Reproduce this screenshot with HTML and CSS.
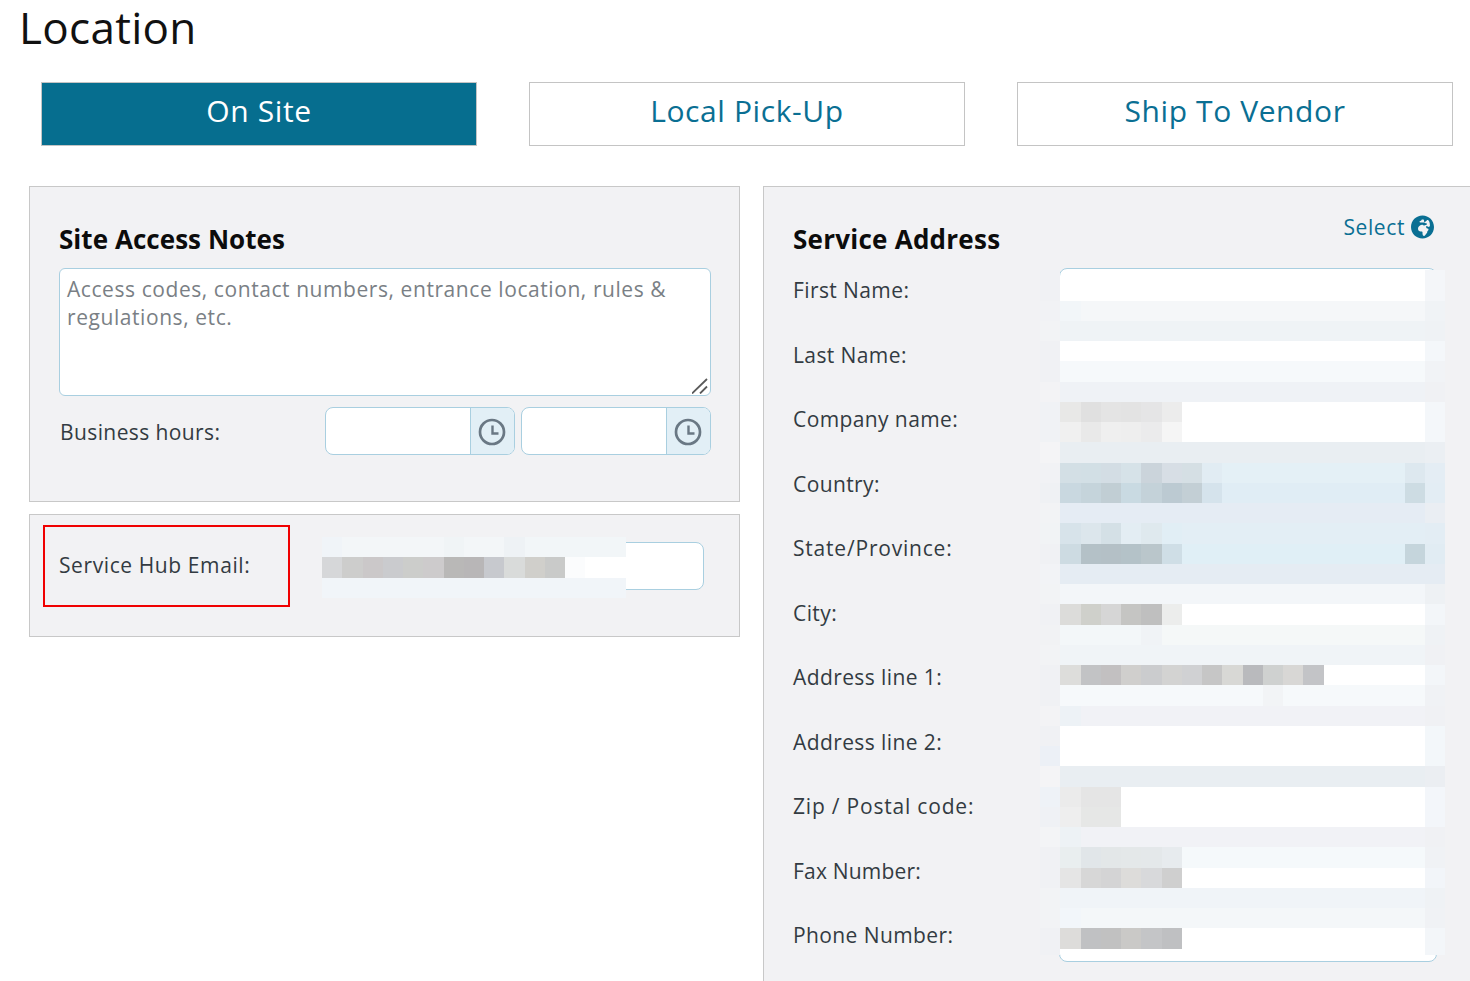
FILE: index.html
```html
<!DOCTYPE html>
<html lang="en">
<head>
<meta charset="utf-8">
<title>Location</title>
<link rel="stylesheet" href="styles.css">
</head>
<body>
<main class="page">
  <h1 class="title">Location</h1>
  <div class="tabs">
    <button class="tab tab-active">On Site</button>
    <button class="tab">Local Pick-Up</button>
    <button class="tab">Ship To Vendor</button>
  </div>
  <div class="columns">
    <div class="col-left">
      <section class="panel notes">
        <h2 class="heading">Site Access Notes</h2>
        <div class="notes-wrap">
          <textarea class="notes-input" placeholder="Access codes, contact numbers, entrance location, rules &amp; regulations, etc."></textarea>
          <svg class="resize-grip" viewBox="0 0 16 16"><path d="M0 15.500L15 1M8 15.500L15 8.500" fill="none" stroke="#5a5a5a" stroke-width="1.800"/></svg>
        </div>
        <div class="hours">
          <span class="label hours-label">Business hours:</span>
          <div class="time">
            <input class="time-input" type="text">
            <span class="time-addon"><svg class="clock" viewBox="0 0 28 28"><circle cx="14" cy="14" r="12" fill="none" stroke="#6a7884" stroke-width="2.700"/><path d="M14.500 7.500V15.500H20.500" fill="none" stroke="#6a7884" stroke-width="2.400"/></svg></span>
          </div>
          <div class="time">
            <input class="time-input" type="text">
            <span class="time-addon"><svg class="clock" viewBox="0 0 28 28"><circle cx="14" cy="14" r="12" fill="none" stroke="#6a7884" stroke-width="2.700"/><path d="M14.500 7.500V15.500H20.500" fill="none" stroke="#6a7884" stroke-width="2.400"/></svg></span>
          </div>
        </div>
      </section>
      <section class="panel hub">
        <div class="hub-label"><span class="label hub-text">Service Hub Email:</span></div>
        <div class="hub-field">
          <svg class="mosaic hub-mosaic" viewBox="0 0 15 3" preserveAspectRatio="none" shape-rendering="crispEdges">
            <rect x="0" y="0" width="15" height="1" fill="#f3f6f8"/><rect x="0" y="0" width="1" height="1" fill="#f0f4f8"/><rect x="6" y="0" width="1" height="1" fill="#f0f4f6"/><rect x="9" y="0" width="1" height="1" fill="#eef2f5"/><rect x="10" y="0" width="5" height="1" fill="#f2f6f8"/>
            <rect x="0" y="1" width="1" height="1" fill="#d6d7d9"/><rect x="1" y="1" width="1" height="1" fill="#cdcdcc"/><rect x="2" y="1" width="1" height="1" fill="#cbc8c9"/><rect x="3" y="1" width="1" height="1" fill="#cacbce"/><rect x="4" y="1" width="1" height="1" fill="#cccdcb"/><rect x="5" y="1" width="1" height="1" fill="#cdcbcc"/><rect x="6" y="1" width="1" height="1" fill="#b9b8b7"/><rect x="7" y="1" width="1" height="1" fill="#b8b6b7"/><rect x="8" y="1" width="1" height="1" fill="#c7c9ce"/><rect x="9" y="1" width="1" height="1" fill="#d9dbda"/><rect x="10" y="1" width="1" height="1" fill="#d0cfcb"/><rect x="11" y="1" width="1" height="1" fill="#c9cac9"/><rect x="12" y="1" width="1" height="1" fill="#fbfcfd"/><rect x="13" y="1" width="2" height="1" fill="#ffffff"/>
            <rect x="0" y="2" width="15" height="1" fill="#f1f5f9"/>
          </svg>
        </div>
      </section>
    </div>
    <section class="panel address">
      <header class="address-head">
        <h2 class="heading">Service Address</h2>
        <a class="select-link">Select
          <svg class="globe" viewBox="0 0 496 512"><path fill="#0a6f93" d="M248 8C111.030 8 0 119.030 0 256s111.030 248 248 248 248-111.030 248-248S384.970 8 248 8zm160 215.500v6.930c0 5.870-3.320 11.240-8.570 13.860l-15.390 7.700a15.485 15.485 0 0 1-15.530-.97l-18.210-12.140a15.520 15.520 0 0 0-13.500-1.810l-2.650.88c-9.700 3.230-13.660 14.790-7.990 23.300l13.240 19.860c2.870 4.310 7.710 6.900 12.890 6.900h8.210c8.560 0 15.500 6.940 15.500 15.500v11.340c0 3.350-1.090 6.620-3.100 9.300l-18.740 24.980c-1.420 1.900-2.390 4.100-2.830 6.430l-4.300 22.830c-.62 3.290-2.290 6.290-4.760 8.560a159.608 159.608 0 0 0-25 29.160l-13.030 19.550a27.756 27.756 0 0 1-23.090 12.360c-10.510 0-20.120-5.940-24.820-15.340a78.902 78.902 0 0 1-8.330-35.290V367.500c0-8.560-6.940-15.500-15.500-15.500h-25.880c-14.490 0-28.380-5.760-38.630-16a54.659 54.659 0 0 1-16-38.630v-14.060c0-17.190 8.100-33.380 21.850-43.700l27.580-20.690a54.663 54.663 0 0 1 32.780-10.930h.89c8.480 0 16.850 1.970 24.430 5.770l14.720 7.360c3.680 1.840 7.930 2.140 11.830.84l47.310-15.770c6.330-2.110 10.600-8.030 10.600-14.700 0-8.560-6.940-15.500-15.500-15.500h-10.090c-4.110 0-8.050-1.630-10.960-4.540l-6.920-6.920a15.493 15.493 0 0 0-10.960-4.540H199.500c-8.560 0-15.500-6.940-15.500-15.500v-4.400c0-7.110 4.840-13.310 11.740-15.040l14.450-3.610c3.740-.94 7-3.230 9.140-6.440l8.080-12.110c2.870-4.310 7.710-6.900 12.900-6.900h24.210c8.560 0 15.500 6.940 15.500 15.500v21.700c0 8.560 6.940 15.500 15.500 15.500h6.210c8.560 0 15.500-6.940 15.500-15.500v-.4c0-3.580 2.420-6.710 5.880-7.620l10.540-2.770a15.500 15.500 0 0 0 11.620-15v-.19C383.470 84.600 408 148.600 408 223.500z"/></svg>
        </a>
      </header>
      <div class="address-form">
        <div class="address-labels">
          <div class="address-label">First Name:</div>
          <div class="address-label">Last Name:</div>
          <div class="address-label">Company name:</div>
          <div class="address-label">Country:</div>
          <div class="address-label address-label-wide">State/Province:</div>
          <div class="address-label">City:</div>
          <div class="address-label">Address line 1:</div>
          <div class="address-label">Address line 2:</div>
          <div class="address-label address-label-wide">Zip / Postal code:</div>
          <div class="address-label address-label-tight">Fax Number:</div>
          <div class="address-label">Phone Number:</div>
        </div>
        <div class="address-field">
          <svg class="mosaic address-mosaic" viewBox="0 0 20 34.350" preserveAspectRatio="none" shape-rendering="crispEdges">
            <!-- side strips -->
            <rect x="0" y="0.470" width="1" height="1.530" fill="#f0f1f4"/><rect x="19" y="0.470" width="1" height="1.530" fill="#f4f6f9"/>
            <rect x="0" y="2" width="1" height="1" fill="#f1f2f5"/><rect x="1" y="2" width="1" height="1" fill="#f2f6f9"/><rect x="2" y="2" width="17" height="1" fill="#f5f7f9"/><rect x="19" y="2" width="1" height="1" fill="#f0f3f6"/>
            <rect x="0" y="3" width="1" height="1" fill="#f2f3f5"/><rect x="1" y="3" width="18" height="1" fill="#eff3f6"/><rect x="19" y="3" width="1" height="1" fill="#eff2f5"/>
            <rect x="0" y="4" width="1" height="1" fill="#f0f1f4"/><rect x="19" y="4" width="1" height="1" fill="#f4f7fa"/>
            <rect x="0" y="5" width="1" height="1" fill="#f0f1f4"/><rect x="1" y="5" width="18" height="1" fill="#f6f9fb"/><rect x="19" y="5" width="1" height="1" fill="#f1f3f6"/>
            <rect x="0" y="6" width="1" height="1" fill="#f3f3f5"/><rect x="1" y="6" width="18" height="1" fill="#eff2f6"/><rect x="19" y="6" width="1" height="1" fill="#f0f1f4"/>
            <!-- company -->
            <rect x="0" y="7" width="1" height="2" fill="#f0f2f5"/><rect x="19" y="7" width="1" height="2" fill="#f4f7fa"/>
            <rect x="1" y="7" width="1" height="1" fill="#e8e8e7"/><rect x="2" y="7" width="1" height="1" fill="#e0e0e0"/><rect x="3" y="7" width="1" height="1" fill="#e4e4e4"/><rect x="4" y="7" width="1" height="1" fill="#e3e3e3"/><rect x="5" y="7" width="1" height="1" fill="#e5e5e6"/><rect x="6" y="7" width="1" height="1" fill="#ececec"/>
            <rect x="1" y="8" width="1" height="1" fill="#f0f0f0"/><rect x="2" y="8" width="1" height="1" fill="#e9e9e9"/><rect x="3" y="8" width="1" height="1" fill="#efefef"/><rect x="4" y="8" width="1" height="1" fill="#eeeeee"/><rect x="5" y="8" width="1" height="1" fill="#ebebec"/><rect x="6" y="8" width="1" height="1" fill="#f5f5f5"/>
            <rect x="0" y="9" width="1" height="1" fill="#f4f4f6"/><rect x="1" y="9" width="18" height="1" fill="#e9eef2"/><rect x="19" y="9" width="1" height="1" fill="#ebeff3"/>
            <!-- country -->
            <rect x="0" y="10" width="1" height="1" fill="#f1f2f5"/><rect x="1" y="10" width="18" height="1" fill="#e4f0f6"/><rect x="19" y="10" width="1" height="1" fill="#e4edf4"/>
            <rect x="1" y="10" width="1" height="1" fill="#d3dfe5"/><rect x="2" y="10" width="1" height="1" fill="#d2dfe5"/><rect x="3" y="10" width="1" height="1" fill="#d3dde4"/><rect x="4" y="10" width="1" height="1" fill="#d6e2e8"/><rect x="5" y="10" width="1" height="1" fill="#cbd4db"/><rect x="6" y="10" width="1" height="1" fill="#d7dee5"/><rect x="7" y="10" width="1" height="1" fill="#d5dfe4"/><rect x="8" y="10" width="1" height="1" fill="#e1ecf3"/><rect x="18" y="10" width="1" height="1" fill="#dde8ef"/>
            <rect x="0" y="11" width="1" height="1" fill="#eff1f4"/><rect x="1" y="11" width="18" height="1" fill="#e0edf5"/><rect x="19" y="11" width="1" height="1" fill="#e3edf4"/>
            <rect x="1" y="11" width="1" height="1" fill="#c9d8e0"/><rect x="2" y="11" width="1" height="1" fill="#c5d4db"/><rect x="3" y="11" width="1" height="1" fill="#c1ced4"/><rect x="4" y="11" width="1" height="1" fill="#c9dae2"/><rect x="5" y="11" width="1" height="1" fill="#c4d2d9"/><rect x="6" y="11" width="1" height="1" fill="#bccad2"/><rect x="7" y="11" width="1" height="1" fill="#c3cfd5"/><rect x="8" y="11" width="1" height="1" fill="#d5e3ec"/><rect x="18" y="11" width="1" height="1" fill="#cddce3"/>
            <rect x="0" y="12" width="1" height="1" fill="#f2f3f5"/><rect x="1" y="12" width="18" height="1" fill="#e5ecf4"/><rect x="19" y="12" width="1" height="1" fill="#eaeef3"/>
            <!-- state -->
            <rect x="0" y="13" width="1" height="1" fill="#f1f3f5"/><rect x="1" y="13" width="18" height="1" fill="#e3eef5"/><rect x="19" y="13" width="1" height="1" fill="#e3edf4"/>
            <rect x="1" y="13" width="1" height="1" fill="#d7e3ea"/><rect x="2" y="13" width="1" height="1" fill="#dce6ec"/><rect x="3" y="13" width="1" height="1" fill="#d4e0e6"/><rect x="4" y="13" width="1" height="1" fill="#e3edf3"/><rect x="5" y="13" width="1" height="1" fill="#dfe9ee"/><rect x="6" y="13" width="1" height="1" fill="#e1eef5"/>
            <rect x="0" y="14" width="1" height="1" fill="#f0f1f4"/><rect x="1" y="14" width="18" height="1" fill="#e0eff6"/><rect x="19" y="14" width="1" height="1" fill="#e1ecf3"/>
            <rect x="1" y="14" width="1" height="1" fill="#cddbe2"/><rect x="2" y="14" width="1" height="1" fill="#b4c1c7"/><rect x="3" y="14" width="1" height="1" fill="#b4c0c6"/><rect x="4" y="14" width="1" height="1" fill="#b4c2c8"/><rect x="5" y="14" width="1" height="1" fill="#bac6cb"/><rect x="6" y="14" width="1" height="1" fill="#cfdee6"/><rect x="18" y="14" width="1" height="1" fill="#c5d5dc"/>
            <rect x="0" y="15" width="1" height="1" fill="#f2f3f6"/><rect x="1" y="15" width="19" height="1" fill="#e5ecf3"/>
            <!-- city -->
            <rect x="0" y="16" width="1" height="1" fill="#f2f3f5"/><rect x="1" y="16" width="18" height="1" fill="#f3f6f9"/><rect x="19" y="16" width="1" height="1" fill="#eef1f4"/>
            <rect x="0" y="17" width="1" height="1" fill="#f0f1f4"/><rect x="19" y="17" width="1" height="1" fill="#f3f6f9"/>
            <rect x="1" y="17" width="1" height="1" fill="#dcdcda"/><rect x="2" y="17" width="1" height="1" fill="#cfd0cb"/><rect x="3" y="17" width="1" height="1" fill="#d6d6d6"/><rect x="4" y="17" width="1" height="1" fill="#c5c5c3"/><rect x="5" y="17" width="1" height="1" fill="#bfbfbf"/><rect x="6" y="17" width="1" height="1" fill="#ecedec"/>
            <rect x="0" y="18" width="1" height="1" fill="#f1f2f4"/><rect x="1" y="18" width="18" height="1" fill="#f5f8f8"/><rect x="1" y="18" width="4" height="1" fill="#f3f7f9"/><rect x="5" y="18" width="1" height="1" fill="#f0f3f6"/><rect x="19" y="18" width="1" height="1" fill="#eff2f5"/>
            <rect x="0" y="19" width="1" height="1" fill="#f2f3f5"/><rect x="1" y="19" width="18" height="1" fill="#f0f4f7"/><rect x="19" y="19" width="1" height="1" fill="#f0f1f4"/>
            <!-- line 1 -->
            <rect x="0" y="20" width="1" height="1" fill="#f0f1f4"/><rect x="19" y="20" width="1" height="1" fill="#f3f6f9"/>
            <rect x="1" y="20" width="1" height="1" fill="#dddddb"/><rect x="2" y="20" width="1" height="1" fill="#c2c3c5"/><rect x="3" y="20" width="1" height="1" fill="#c2c0c1"/><rect x="4" y="20" width="1" height="1" fill="#d0cfcd"/><rect x="5" y="20" width="1" height="1" fill="#cbccce"/><rect x="6" y="20" width="1" height="1" fill="#d3d3d2"/><rect x="7" y="20" width="1" height="1" fill="#d0d1d3"/><rect x="8" y="20" width="1" height="1" fill="#c6c6c6"/><rect x="9" y="20" width="1" height="1" fill="#d8d8d5"/><rect x="10" y="20" width="1" height="1" fill="#b9babd"/><rect x="11" y="20" width="1" height="1" fill="#cfd1d0"/><rect x="12" y="20" width="1" height="1" fill="#d8d7d5"/><rect x="13" y="20" width="1" height="1" fill="#c3c4c7"/>
            <rect x="0" y="21" width="1" height="1" fill="#f0f1f4"/><rect x="1" y="21" width="18" height="1" fill="#f6f9fb"/><rect x="11" y="21" width="1" height="1" fill="#f2f4f6"/><rect x="19" y="21" width="1" height="1" fill="#f0f2f5"/>
            <rect x="0" y="22" width="1" height="1" fill="#f3f3f5"/><rect x="1" y="22" width="1" height="1" fill="#edf2f6"/><rect x="2" y="22" width="17" height="1" fill="#f1f2f6"/><rect x="19" y="22" width="1" height="1" fill="#f0f1f4"/>
            <!-- line 2 -->
            <rect x="0" y="23" width="1" height="1" fill="#f0f1f4"/><rect x="19" y="23" width="1" height="2" fill="#f3f7fa"/><rect x="0" y="24" width="1" height="1" fill="#ecf0f6"/>
            <rect x="0" y="25" width="1" height="1" fill="#f4f4f6"/><rect x="1" y="25" width="18" height="1" fill="#e9eef2"/><rect x="19" y="25" width="1" height="1" fill="#ebeef2"/>
            <!-- zip -->
            <rect x="0" y="26" width="1" height="1" fill="#eef2f7"/><rect x="19" y="26" width="1" height="2" fill="#f3f6fa"/><rect x="1" y="26" width="1" height="1" fill="#ebebeb"/><rect x="2" y="26" width="2" height="1" fill="#e5e5e5"/>
            <rect x="0" y="27" width="1" height="1" fill="#eff1f5"/><rect x="1" y="27" width="1" height="1" fill="#eeeeee"/><rect x="2" y="27" width="2" height="1" fill="#e6e7e6"/>
            <rect x="0" y="28" width="1" height="1" fill="#f3f4f6"/><rect x="1" y="28" width="1" height="1" fill="#edf2f5"/><rect x="2" y="28" width="17" height="1" fill="#f1f2f6"/><rect x="19" y="28" width="1" height="1" fill="#f0f1f4"/>
            <!-- fax -->
            <rect x="0" y="29" width="1" height="1" fill="#f0f1f4"/><rect x="1" y="29" width="18" height="1" fill="#f5f9fb"/><rect x="19" y="29" width="1" height="1" fill="#f0f2f5"/>
            <rect x="1" y="29" width="1" height="1" fill="#e9eeef"/><rect x="2" y="29" width="1" height="1" fill="#e1e6e9"/><rect x="3" y="29" width="1" height="1" fill="#e3e7e8"/><rect x="4" y="29" width="1" height="1" fill="#e4e8e9"/><rect x="5" y="29" width="1" height="1" fill="#e4e8ea"/><rect x="6" y="29" width="1" height="1" fill="#e7ebee"/>
            <rect x="0" y="30" width="1" height="1" fill="#f0f1f4"/><rect x="19" y="30" width="1" height="1" fill="#f2f5f9"/>
            <rect x="1" y="30" width="1" height="1" fill="#e5e5e5"/><rect x="2" y="30" width="1" height="1" fill="#d7d7d7"/><rect x="3" y="30" width="1" height="1" fill="#d4d4d5"/><rect x="4" y="30" width="1" height="1" fill="#dddcda"/><rect x="5" y="30" width="1" height="1" fill="#d8d9db"/><rect x="6" y="30" width="1" height="1" fill="#cfcfcf"/>
            <rect x="0" y="31" width="1" height="1" fill="#f2f3f5"/><rect x="1" y="31" width="18" height="1" fill="#f0f4f8"/><rect x="19" y="31" width="1" height="1" fill="#eff2f5"/>
            <rect x="0" y="32" width="1" height="1" fill="#f2f3f5"/><rect x="1" y="32" width="1" height="1" fill="#f2f6fa"/><rect x="2" y="32" width="17" height="1" fill="#f4f7f9"/><rect x="19" y="32" width="1" height="1" fill="#f0f2f5"/>
            <!-- phone -->
            <rect x="0" y="33" width="1" height="1.350" fill="#f0f1f4"/><rect x="19" y="33" width="1" height="1.350" fill="#f3f6f9"/>
            <rect x="1" y="33" width="1" height="1" fill="#dddcda"/><rect x="2" y="33" width="1" height="1" fill="#c0c1c3"/><rect x="3" y="33" width="1" height="1" fill="#c1c1c1"/><rect x="4" y="33" width="1" height="1" fill="#cac9c7"/><rect x="5" y="33" width="1" height="1" fill="#c4c5c7"/><rect x="6" y="33" width="1" height="1" fill="#bfc0c2"/>
          </svg>
        </div>
      </div>
    </section>
  </div>
</main>
</body>
</html>
```
FILE: styles.css
```css
html, body {
  margin: 0;
  padding: 0;
  height: 981px;
  overflow: hidden;
  background: #ffffff;
}

body {
  font-family: "Open Sans", "Noto Sans", sans-serif;
  color: #333b42;
}

.page {
  width: 1470px;
  height: 981px;
  overflow: hidden;
}

.title {
  margin: 0;
  height: 82px;
  padding-left: 19px;
  box-sizing: border-box;
  font-size: 44px;
  line-height: 54px;
  font-weight: 400;
  color: #111111;
  letter-spacing: 0.3px;
}

.tabs {
  display: grid;
  grid-template-columns: 436px 436px 436px;
  column-gap: 52px;
  padding-left: 41px;
  margin-bottom: 40px;
}

.tab {
  height: 64px;
  border: 1px solid #c4c4c4;
  background: #ffffff;
  color: #0a6f93;
  font-family: inherit;
  font-size: 30px;
  letter-spacing: 0.6px;
  padding: 0 0 7px;
}

.tab-active {
  background: #066e8f;
  color: #ffffff;
}

.columns {
  display: flex;
  align-items: flex-start;
  gap: 23px;
  padding-left: 29px;
}

.col-left {
  display: flex;
  flex-direction: column;
  gap: 12px;
  width: 711px;
  flex: none;
}

.panel {
  box-sizing: border-box;
  background: #f2f2f4;
  border: 1px solid #c8c8c8;
}

.notes {
  height: 316px;
  padding: 28px 29px 0 29px;
}

.heading {
  margin: 0;
  font-size: 26px;
  line-height: 38px;
  font-weight: 700;
  color: #0c0c0c;
  letter-spacing: 0.05px;
}

.notes .heading {
  height: 53px;
  padding-top: 5px;
  box-sizing: border-box;
}

.notes-wrap {
  position: relative;
}

.notes-input {
  display: block;
  box-sizing: border-box;
  width: 652px;
  height: 128px;
  border: 1px solid #a9cfe0;
  border-radius: 6px;
  background: #ffffff;
  padding: 6px 7px;
  margin: 0;
  font-family: inherit;
  font-size: 21px;
  line-height: 28px;
  letter-spacing: 0.57px;
  color: #333b42;
  outline: none;
  resize: none;
}

.notes-input::placeholder {
  color: #7a7f85;
  opacity: 1;
}

.resize-grip {
  position: absolute;
  right: 2px;
  bottom: 2px;
  width: 16px;
  height: 16px;
}

.hours {
  display: flex;
  align-items: center;
  gap: 6px;
  margin-top: 11px;
}

.label {
  font-size: 21px;
  line-height: 28px;
  letter-spacing: 0.4px;
}

.hours-label {
  width: 260px;
  padding: 2px 0 0 1px;
  box-sizing: border-box;
  flex: none;
}

.time {
  display: flex;
  box-sizing: border-box;
  width: 190px;
  height: 48px;
  border: 1px solid #a9cfe0;
  border-radius: 8px;
  background: #ffffff;
  overflow: hidden;
  flex: none;
}

.time-input {
  flex: 1;
  min-width: 0;
  border: 0;
  padding: 0;
  background: transparent;
  outline: none;
}

.time-addon {
  display: flex;
  align-items: center;
  justify-content: center;
  width: 44px;
  padding: 1px 2px 0 0;
  box-sizing: border-box;
  flex: none;
  background: #e2eff6;
  border-left: 1px solid #a9cfe0;
}

.clock {
  width: 28px;
  height: 28px;
}

.hub {
  display: flex;
  height: 123px;
  padding: 10px 13px;
}

.hub-label {
  box-sizing: border-box;
  width: 247px;
  height: 82px;
  border: 2px solid #f00000;
  display: flex;
  align-items: center;
  padding: 0 0 2px 14px;
  flex: none;
}

.hub-text {
  letter-spacing: 0.6px;
}

.hub-field {
  position: relative;
  box-sizing: border-box;
  width: 382px;
  height: 48px;
  margin: 17px 0 0 32px;
  background: #ffffff;
  border: 1px solid #a9cfe0;
  border-radius: 8px;
  flex: none;
}

.mosaic {
  position: absolute;
  display: block;
}

.hub-mosaic {
  left: -1px;
  top: -6px;
  width: 304px;
  height: 61px;
}

.address {
  width: 720px;
  height: 830px;
  padding: 28px 45px 0 29px;
  flex: none;
}

.address-head {
  display: flex;
  justify-content: space-between;
  align-items: flex-start;
  height: 43px;
}

.address .heading {
  margin-top: 5px;
  letter-spacing: 0.25px;
}

.select-link {
  display: flex;
  align-items: center;
  gap: 6px;
  margin-right: 3px;
  font-size: 21px;
  line-height: 24px;
  letter-spacing: 0.6px;
  color: #0a6f93;
}

.globe {
  width: 23px;
  height: 24px;
}

.address-form {
  display: flex;
}

.address-labels {
  width: 266px;
  flex: none;
}

.address-label {
  height: 64.500px;
  line-height: 64.500px;
  font-size: 21px;
  letter-spacing: 0.4px;
}

.address-label-wide {
  letter-spacing: 0.8px;
}

.address-label-tight {
  letter-spacing: 0.2px;
}

.address-field {
  position: relative;
  box-sizing: border-box;
  width: 379px;
  height: 694px;
  margin-top: 10px;
  background: #ffffff;
  border: 1px solid #a9cfe0;
  border-radius: 8px;
}

.address-mosaic {
  left: -20.500px;
  top: -9.500px;
  width: 405px;
  height: 695.600px;
}
```
